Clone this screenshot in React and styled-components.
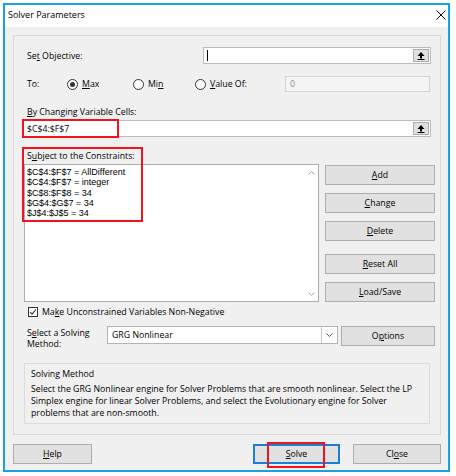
import React from 'react'
import styled, { createGlobalStyle } from 'styled-components'

const GlobalStyle = createGlobalStyle`
  html, body { margin: 0; padding: 0; background: #fff; }
  body {
    font-family: 'Open Sans', 'Noto Sans', sans-serif;
    font-size: 8.75px;
    color: #000;
  }
  u { text-underline-offset: 1px; }
`

const Window = styled.div`
  box-sizing: border-box;
  width: 447px;
  height: 469px;
  margin: 3px 0 0 3px;
  border: 2px solid #18a0e4;
  background: #f0f0f0;
  display: flex;
  flex-direction: column;
`

const TitleBar = styled.div`
  flex-shrink: 0;
  height: 22px;
  background: #fff;
  display: flex;
  align-items: center;
  justify-content: space-between;
  padding: 0 2px 3px 3px;
  box-sizing: border-box;
  font-size: 9px;
`

const Panel = styled.div`
  box-sizing: border-box;
  height: 400px;
  margin: 8px 7px 0 8px;
  border: 1px solid #dadada;
  padding: 0 5px 0 9px;
  display: flex;
  flex-direction: column;
`

const ObjectiveRow = styled.div`
  display: flex;
  align-items: center;
  height: 17px;
  margin-top: 11px;
  padding-right: 4px;
`

const FieldLabel = styled.div`
  box-sizing: border-box;
  width: ${p => p.$width || 180}px;
  padding-left: 4px;
  flex-shrink: 0;
`

const RefInput = styled.div`
  flex: 1;
  box-sizing: border-box;
  height: 17px;
  border: 1px solid #bdbdbd;
  background: #fff;
  display: flex;
  align-items: center;
  padding-left: 3px;
`

const Caret = styled.span`
  width: 1px;
  height: 11px;
  background: #000;
`

const RefButton = styled.div`
  margin-left: auto;
  margin-right: 1px;
  box-sizing: border-box;
  width: 16px;
  height: 13px;
  border: 1px solid #adadad;
  background: #e1e1e1;
  display: flex;
  align-items: center;
  justify-content: center;
`

const ToRow = styled.div`
  display: flex;
  align-items: center;
  height: 16px;
  margin-top: 12px;
  padding-right: 5px;
`

const RadioOption = styled.div`
  box-sizing: border-box;
  width: ${p => p.$width}px;
  flex-shrink: 0;
  display: flex;
  align-items: center;
`

const RadioCircle = styled.span`
  box-sizing: border-box;
  width: 11px;
  height: 11px;
  border-radius: 50%;
  border: 1px solid #333;
  background: #fff;
  display: inline-flex;
  align-items: center;
  justify-content: center;
  margin-right: 4px;
  &::after {
    content: '';
    width: 5px;
    height: 5px;
    border-radius: 50%;
    background: ${p => (p.$checked ? '#333' : 'transparent')};
  }
`

const ValueInput = styled.div`
  flex: 1;
  box-sizing: border-box;
  height: 16px;
  border: 1px solid #d4d4d4;
  background: #f4f4f4;
  color: #8c8c8c;
  padding-left: 4px;
  display: flex;
  align-items: center;
`

const SectionLabel = styled.div`
  height: 12px;
  line-height: 12px;
  padding-left: 4px;
  margin-top: ${p => p.$top || 0}px;
`

const ChangingRow = styled.div`
  position: relative;
  display: flex;
  margin-top: 2px;
  padding-right: 4px;
`

const RedBox = styled.div`
  position: absolute;
  box-sizing: border-box;
  border: 2px solid #f0141e;
  pointer-events: none;
  left: ${p => p.$left}px;
  top: ${p => p.$top}px;
  width: ${p => p.$width}px;
  height: ${p => p.$height}px;
`

const ConstraintsBlock = styled.div`
  position: relative;
  margin-top: 13px;
`

const ListRow = styled.div`
  display: flex;
  height: 138px;
  margin-top: 2px;
`

const ListBox = styled.div`
  box-sizing: border-box;
  width: 295px;
  margin-left: 1px;
  border: 1px solid #adadad;
  background: #fff;
  display: flex;
`

const ListItems = styled.div`
  flex: 1;
  padding: 2px 0 0 2px;
  font-family: 'Liberation Sans', Arial, sans-serif;
  font-size: 9px;
  line-height: 10.3px;
`

const ScrollCol = styled.div`
  width: 14px;
  display: flex;
  flex-direction: column;
  justify-content: space-between;
  align-items: center;
  padding: 6px 0 5px;
`

const ButtonCol = styled.div`
  margin-left: 6px;
  flex: 1;
  display: flex;
  flex-direction: column;
`

const Button = styled.div`
  box-sizing: border-box;
  height: 20px;
  width: ${p => (p.$width ? `${p.$width}px` : 'auto')};
  margin-top: ${p => p.$top || 0}px;
  border: ${p => (p.$default ? '2px solid #1a7fd6' : '1px solid #adadad')};
  background: #e1e1e1;
  display: flex;
  align-items: center;
  justify-content: center;
  position: relative;
  flex-shrink: 0;
`

const CheckRow = styled.div`
  display: flex;
  align-items: center;
  height: 12px;
  margin-top: 4px;
  padding-left: 5px;
`

const CheckBox = styled.span`
  box-sizing: border-box;
  width: 10px;
  height: 10px;
  border: 1px solid #333;
  background: #fff;
  margin-right: 4px;
  display: flex;
  align-items: center;
  justify-content: center;
`

const SelectRow = styled.div`
  display: flex;
  align-items: flex-start;
  height: 20px;
  margin-top: 8px;
`

const MethodLabel = styled.div`
  box-sizing: border-box;
  width: 84px;
  padding: 2px 0 0 4px;
  line-height: 11px;
  flex-shrink: 0;
`

const SelectBox = styled.div`
  box-sizing: border-box;
  width: 231px;
  height: 18px;
  border: 1px solid #b4b4b4;
  background: #fff;
  display: flex;
  align-items: center;
`

const SelectText = styled.div`
  flex: 1;
  padding-left: 4px;
`

const SelectArrow = styled.div`
  width: 15px;
  height: 100%;
  border-left: 1px solid #c8c8c8;
  display: flex;
  align-items: center;
  justify-content: center;
`

const OptionsWrap = styled.div`
  flex: 1;
  margin-left: 3px;
  display: flex;
  flex-direction: column;
`

const MethodBox = styled.div`
  box-sizing: border-box;
  width: 406px;
  height: 61px;
  margin: 17px 0 0 1px;
  border: 1px solid #dcdcdc;
  padding: 5px 6px 0;
`

const MethodTitle = styled.div`
  line-height: 11px;
`

const MethodText = styled.div`
  margin-top: 3px;
  line-height: 12px;
`

const Footer = styled.div`
  display: flex;
  justify-content: space-between;
  margin-top: 9px;
  padding: 0 7px 0 8px;
`

const FooterRight = styled.div`
  display: flex;
  gap: 13px;
`

const UploadIcon = () => (
  <svg width="10" height="10" viewBox="0 0 10 10">
    <polygon points="5,1 1.5,5 8.5,5" fill="#000" />
    <rect x="4" y="4.5" width="2" height="3" fill="#000" />
    <rect x="1.5" y="8" width="7" height="1" fill="#000" />
  </svg>
)

const Chevron = ({ up, color = '#a6a6a6' }) => (
  <svg width="7" height="4" viewBox="0 0 7 4">
    <polyline
      points={up ? '0.5,3.5 3.5,0.5 6.5,3.5' : '0.5,0.5 3.5,3.5 6.5,0.5'}
      fill="none"
      stroke={color}
      strokeWidth="1"
    />
  </svg>
)

const constraints = [
  '$C$4:$F$7 = AllDifferent',
  '$C$4:$F$7 = integer',
  '$C$8:$F$8 = 34',
  '$G$4:$G$7 = 34',
  '$J$4:$J$5 = 34',
]

const App = () => {
  return (
    <>
      <GlobalStyle />
      <Window>
        <TitleBar>
          <span>Solver Parameters</span>
          <svg width="10" height="10" viewBox="0 0 10 10">
            <path d="M0.5 0.5 L9.5 9.5 M9.5 0.5 L0.5 9.5" stroke="#000" strokeWidth="1" />
          </svg>
        </TitleBar>

        <Panel>
          <ObjectiveRow>
            <FieldLabel>Se<u>t</u> Objective:</FieldLabel>
            <RefInput>
              <Caret />
              <RefButton><UploadIcon /></RefButton>
            </RefInput>
          </ObjectiveRow>

          <ToRow>
            <FieldLabel $width={44}>To:</FieldLabel>
            <RadioOption $width={66}>
              <RadioCircle $checked />
              <span><u>M</u>ax</span>
            </RadioOption>
            <RadioOption $width={62}>
              <RadioCircle />
              <span>Mi<u>n</u></span>
            </RadioOption>
            <RadioOption $width={90}>
              <RadioCircle />
              <span><u>V</u>alue Of:</span>
            </RadioOption>
            <ValueInput>0</ValueInput>
          </ToRow>

          <SectionLabel $top={14}><u>B</u>y Changing Variable Cells:</SectionLabel>
          <ChangingRow>
            <RefInput>
              <span>$C$4:$F$7</span>
              <RefButton><UploadIcon /></RefButton>
            </RefInput>
            <RedBox $left={-1} $top={-1} $width={97} $height={19} />
          </ChangingRow>

          <ConstraintsBlock>
            <SectionLabel>S<u>u</u>bject to the Constraints:</SectionLabel>
            <ListRow>
              <ListBox>
                <ListItems>
                  {constraints.map(c => (
                    <div key={c}>{c}</div>
                  ))}
                </ListItems>
                <ScrollCol>
                  <Chevron up />
                  <Chevron />
                </ScrollCol>
              </ListBox>
              <ButtonCol>
                <Button $top={1}><u>A</u>dd</Button>
                <Button $top={8}><u>C</u>hange</Button>
                <Button $top={8}><u>D</u>elete</Button>
                <Button $top={13}><u>R</u>eset All</Button>
                <Button $top={8}><u>L</u>oad/Save</Button>
              </ButtonCol>
            </ListRow>
            <RedBox $left={-1} $top={-3} $width={121} $height={75} />
          </ConstraintsBlock>

          <CheckRow>
            <CheckBox>
              <svg width="8" height="8" viewBox="0 0 8 8">
                <polyline points="1,4 3,6.2 7,1.5" fill="none" stroke="#333" strokeWidth="1.1" />
              </svg>
            </CheckBox>
            <span>Ma<u>k</u>e Unconstrained Variables Non-Negative</span>
          </CheckRow>

          <SelectRow>
            <MethodLabel>S<u>e</u>lect a Solving<br />Method:</MethodLabel>
            <SelectBox>
              <SelectText>GRG Nonlinear</SelectText>
              <SelectArrow><Chevron color="#555" /></SelectArrow>
            </SelectBox>
            <OptionsWrap>
              <Button>O<u>p</u>tions</Button>
            </OptionsWrap>
          </SelectRow>

          <MethodBox>
            <MethodTitle>Solving Method</MethodTitle>
            <MethodText>
              Select the GRG Nonlinear engine for Solver Problems that are smooth nonlinear. Select the LP
              Simplex engine for linear Solver Problems, and select the Evolutionary engine for Solver
              problems that are non-smooth.
            </MethodText>
          </MethodBox>
        </Panel>

        <Footer>
          <Button $width={79}><u>H</u>elp</Button>
          <FooterRight>
            <Button $width={87} $default>
              <u>S</u>olve
              <RedBox $left={12} $top={-4} $width={58} $height={26} />
            </Button>
            <Button $width={88}>Cl<u>o</u>se</Button>
          </FooterRight>
        </Footer>
      </Window>
    </>
  )
}

export default App
